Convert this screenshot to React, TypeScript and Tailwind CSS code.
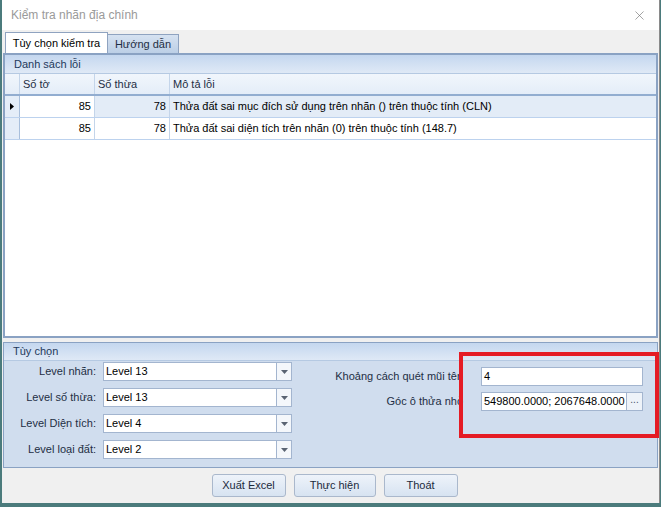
import React from 'react';
import { X } from 'lucide-react';

const rows = [
  { to: '85', thua: '78', moTa: 'Thửa đất sai mục đích sử dụng trên nhãn () trên thuộc tính (CLN)', active: true },
  { to: '85', thua: '78', moTa: 'Thửa đất sai diện tích trên nhãn (0) trên thuộc tính (148.7)', active: false },
];

const levels = [
  { label: 'Level nhãn:', value: 'Level 13' },
  { label: 'Level số thừa:', value: 'Level 13' },
  { label: 'Level Diện tích:', value: 'Level 4' },
  { label: 'Level loại đất:', value: 'Level 2' },
];

const Combo: React.FC<{ value: string }> = ({ value }) => (
  <div className="flex h-[19px] w-[189px] border border-[#a3b5cf] bg-white">
    <div className="flex-1 flex items-center pl-[2px] text-[11px] text-black">{value}</div>
    <div className="w-[15px] border-l border-[#a3b5cf] flex items-center justify-center bg-[#f4f7fb]">
      <svg width="7" height="4" viewBox="0 0 7 4">
        <path d="M0 0h7L3.5 4z" fill="#5a6473" />
      </svg>
    </div>
  </div>
);

const GroupHeader: React.FC<{ title: string; h: string }> = ({ title, h }) => (
  <div className={`${h} flex items-center pl-[9px] text-[11px] text-[#1e395b] bg-gradient-to-b from-[#c4d7ef] to-[#dfe9f6] border-b border-[#b5c9e2]`}>
    {title}
  </div>
);

const Btn: React.FC<{ label: string; w: string }> = ({ label, w }) => (
  <button
    className={`h-[23px] ${w} rounded-[3px] border border-[#aab8cc] bg-gradient-to-b from-[#eef3fa] to-[#d7e3f1] text-[11px] text-[#1b2a3c]`}
  >
    {label}
  </button>
);

export default function App() {
  return (
    <div className="w-[661px] h-[507px] bg-[#4b7b7c] overflow-hidden font-['Liberation_Sans',sans-serif]">
      <div className="ml-[2px] w-[658px] h-[503px] flex flex-col bg-[#f0f0f0] border-r border-[#8a8a8a] relative">
        {/* title bar */}
        <div className="h-[30px] bg-white flex items-center justify-between pl-[9px] pr-[12px]">
          <span className="text-[12px] text-[#9a9a9a]">Kiểm tra nhãn địa chính</span>
          <X size={15} strokeWidth={1} className="text-[#6d6d6d]" />
        </div>

        {/* tabs */}
        <div className="flex items-end h-[22px] pl-[3px] mt-[1px]">
          <div className="h-[21px] w-[103px] bg-white border border-b-0 border-[#8fa3c0] flex items-center justify-center text-[11px] text-black">
            Tùy chọn kiểm tra
          </div>
          <div className="h-[19px] w-[71px] bg-gradient-to-b from-[#d6e2f1] to-[#bccfe6] border border-l-0 border-b-0 border-[#8fa3c0] flex items-center justify-center text-[11px] text-[#1e2e44]">
            Hướng dẫn
          </div>
        </div>

        {/* Danh sách lỗi group */}
        <div className="mx-[1px] h-[285px] flex flex-col border-2 border-[#8aa2c3] bg-white">
          <GroupHeader title="Danh sách lỗi" h="h-[19px]" />
          <div className="flex h-[22px] bg-gradient-to-b from-[#f1f6fc] to-[#e4edf8] border-b-2 border-[#92add0] text-[11px] text-[#1e2e44]">
            <div className="w-[15px] border-r border-[#c4d5ea]" />
            <div className="w-[75px] border-r border-[#c4d5ea] flex items-center pl-[3px]">Số tờ</div>
            <div className="w-[75px] border-r border-[#c4d5ea] flex items-center pl-[3px]">Số thừa</div>
            <div className="flex-1 flex items-center pl-[3px]">Mô tả lỗi</div>
          </div>
          {rows.map((r, i) => (
            <div key={i} className="flex h-[22px] border-b border-[#bcd2ee] text-[11px] text-black">
              <div className="w-[15px] border-r border-[#a8bfdc] bg-[#e4edf8] flex items-center justify-center">
                {r.active && (
                  <svg width="4" height="7" viewBox="0 0 4 7">
                    <path d="M0 0l4 3.5L0 7z" fill="#000" />
                  </svg>
                )}
              </div>
              <div className="w-[75px] border-r border-[#c4d5ea] bg-white flex items-center justify-end pr-[3px]">{r.to}</div>
              <div className={`w-[75px] border-r border-[#c4d5ea] ${r.active ? 'bg-[#e3ecf7]' : 'bg-white'} flex items-center justify-end pr-[3px]`}>{r.thua}</div>
              <div className={`flex-1 ${r.active ? 'bg-[#e3ecf7]' : 'bg-white'} flex items-center pl-[3px]`}>{r.moTa}</div>
            </div>
          ))}
          <div className="flex-1 bg-white" />
        </div>

        {/* Tùy chọn group */}
        <div className="mx-[1px] mt-[4px] h-[126px] flex flex-col border border-[#8aa2c3] bg-[#d0ddee]">
          <GroupHeader title="Tùy chọn" h="h-[18px]" />
          <div className="flex pt-[1px]">
            <div className="w-[288px] flex flex-col gap-[7px]">
              {levels.map((l) => (
                <div key={l.label} className="flex items-center justify-end gap-[7px] h-[19px]">
                  <span className="text-[11px] text-[#1e2e44]">{l.label}</span>
                  <Combo value={l.value} />
                </div>
              ))}
            </div>
            <div className="flex-1 flex flex-col gap-[6px] pt-[5px] pr-[14px]">
              <div className="flex items-center justify-end h-[19px]">
                <span className="text-[11px] text-[#1e2e44] mr-[18px]">Khoảng cách quét mũi tên</span>
                <div className="w-[162px] h-[19px] bg-white border border-[#a3b5cf] flex items-center pl-[2px] text-[11px] text-black">4</div>
              </div>
              <div className="flex items-center justify-end h-[19px]">
                <span className="text-[11px] text-[#1e2e44] mr-[18px]">Góc ô thửa nhỏ</span>
                <div className="w-[162px] h-[19px] bg-white border border-[#a3b5cf] flex">
                  <div className="flex-1 flex items-center pl-[2px] text-[11px] text-black">549800.0000; 2067648.0000</div>
                  <div className="w-[16px] border-l border-[#a3b5cf] bg-[#eef3f9] flex items-center justify-center text-[10px] text-[#4a5567] leading-none pb-[3px]">...</div>
                </div>
              </div>
            </div>
          </div>
        </div>

        {/* buttons */}
        <div className="flex justify-center gap-[8px] mt-[6px] pl-[8px]">
          <Btn label="Xuất Excel" w="w-[74px]" />
          <Btn label="Thực hiện" w="w-[82px]" />
          <Btn label="Thoát" w="w-[74px]" />
        </div>

        {/* red annotation */}
        <div className="absolute left-[457px] top-[352px] w-[200px] h-[86px] border-[4px] border-[#e51b24]" />
      </div>
    </div>
  );
}
